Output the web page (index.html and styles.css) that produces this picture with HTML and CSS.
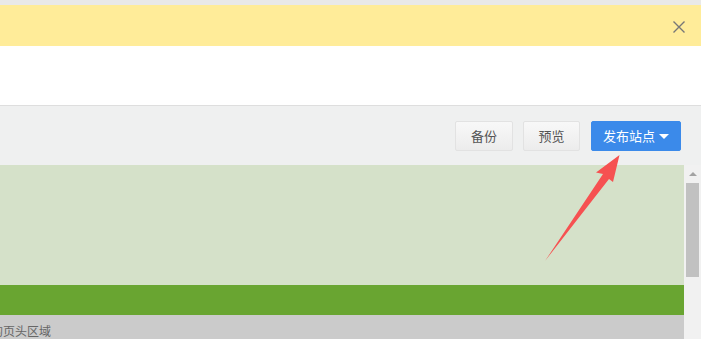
FILE: index.html
```html
<!DOCTYPE html>
<html lang="zh">
<head>
<meta charset="utf-8">
<link rel="stylesheet" href="styles.css">
</head>
<body>
<div class="topline"></div>
<div class="notice">
  <svg class="close" width="14" height="14" viewBox="0 0 14 14"><path d="M1.5 1.5L12.5 12.5M12.5 1.5L1.5 12.5" stroke="#777" stroke-width="1.4" fill="none"/></svg>
</div>
<div class="blank"></div>
<div class="toolbar">
  <button class="btn">备份</button>
  <button class="btn btn-preview">预览</button>
  <button class="btn btn-primary">发布站点<span class="caret"></span></button>
</div>
<div class="main">
  <div class="content">
    <div class="banner"></div>
    <div class="nav"></div>
    <div class="header-area"><span class="label">的页头区域</span></div>
  </div>
  <div class="scrollbar">
    <div class="sb-up"><span class="sb-arrow"></span></div>
    <div class="sb-thumb"></div>
  </div>
</div>
<svg class="pointer" width="701" height="339" viewBox="0 0 701 339">
  <polygon points="545,261 603,174 596,172.5 619.5,155 613,182 609,179" fill="#f65151"/>
</svg>
</body>
</html>
```
FILE: styles.css
```css
html, body {
  margin: 0;
  padding: 0;
  background: #fff;
  overflow: hidden;
  font-family: "Noto Sans CJK SC", "Liberation Sans", sans-serif;
}
body {
  width: 701px;
  height: 339px;
  position: relative;
}
.topline {
  height: 5px;
  background: #e9e9e9;
}
.notice {
  height: 41px;
  background: #ffec99;
  display: flex;
  align-items: center;
  justify-content: flex-end;
  padding-right: 15px;
}
.close {
  display: block;
  margin-top: 2px;
}
.blank {
  height: 59px;
  background: #fff;
}
.toolbar {
  border-top: 1px solid #dedede;
  background: #eff0f0;
  display: flex;
  align-items: flex-start;
  justify-content: flex-end;
  padding: 15px 20px 0 0;
  box-sizing: border-box;
  height: 60px;
  gap: 10px;
}
.btn {
  height: 30px;
  width: 58px;
  padding: 0;
  border: 1px solid #e2e2e2;
  border-radius: 2px;
  background: linear-gradient(#f8f8f8, #ececec);
  color: #555;
  font-family: "Noto Sans CJK SC", sans-serif;
  font-size: 13px;
  line-height: 28px;
  box-sizing: border-box;
}
.btn-preview {
  width: 57px;
}
.btn-primary {
  width: 90px;
  margin-left: 1px;
  background: #3b8aea;
  border-color: #3b8aea;
  color: #fff;
  display: flex;
  align-items: center;
  justify-content: center;
  gap: 4px;
}
.caret {
  width: 0;
  height: 0;
  border-left: 5px solid transparent;
  border-right: 5px solid transparent;
  border-top: 5px solid #fff;
  margin-top: 1px;
}
.main {
  display: flex;
  height: 174px;
}
.content {
  flex: 1;
  display: flex;
  flex-direction: column;
}
.banner {
  height: 121px;
  background: #d5e1c9;
}
.nav {
  height: 30px;
  background: #69a531;
}
.header-area {
  flex: 1;
  background: #cbcbcb;
  padding-top: 8px;
  box-sizing: border-box;
}
.label {
  display: block;
  margin-left: -9px;
  font-size: 12px;
  line-height: 16px;
  color: #666;
}
.scrollbar {
  width: 17px;
  background: #f1f1f1;
  display: flex;
  flex-direction: column;
  align-items: center;
}
.sb-up {
  height: 18px;
  width: 17px;
  display: flex;
  align-items: center;
  justify-content: center;
}
.sb-arrow {
  width: 0;
  height: 0;
  border-left: 4px solid transparent;
  border-right: 4px solid transparent;
  border-bottom: 4px solid #a3a3a3;
}
.sb-thumb {
  width: 13px;
  height: 94px;
  background: #c1c1c1;
}
.pointer {
  position: absolute;
  left: 0;
  top: 0;
  pointer-events: none;
}
```
